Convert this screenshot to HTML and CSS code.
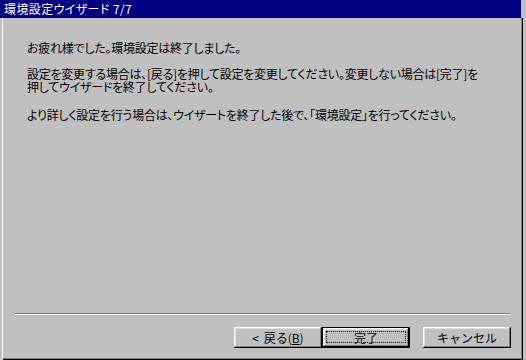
FILE: index.html
```html
<!DOCTYPE html>
<html lang="ja">
<head>
<meta charset="utf-8">
<title>環境設定ウイザード 7/7</title>
<link rel="stylesheet" href="styles.css">
</head>
<body>
<div class="window">
  <div class="titlebar">環境設定ウイザード 7/7</div>
  <div class="frame">
    <div class="content">
      <p class="msg">お疲れ様でした。環境設定は終了しました。</p>
      <p class="msg">設定を変更する場合は、[戻る]を押して設定を変更してください。変更しない場合は[完了]を<br>押してウイザードを終了してください。</p>
      <p class="msg">より詳しく設定を行う場合は、ウイザートを終了した後で、「環境設定」を行ってください。</p>
    </div>
    <div class="separator"></div>
    <div class="buttons">
      <div class="btn-pair">
        <button class="btn">&lt; 戻る(<u>B</u>)</button>
        <button class="btn default"><span class="focus">完了</span></button>
      </div>
      <button class="btn">キャンセル</button>
    </div>
  </div>
</div>
</body>
</html>
```
FILE: styles.css
```css
html, body {
  margin: 0;
  padding: 0;
}
body {
  background: #c0c0c0;
  width: 526px;
  height: 360px;
  overflow: hidden;
  font-family: "Noto Sans CJK JP", "Noto Sans", sans-serif;
  font-size: 12px;
  color: #000;
}
.window {
  width: 523px;
  height: 360px;
  display: flex;
  flex-direction: column;
}
.titlebar {
  width: 517px;
  height: 18px;
  line-height: 18px;
  background: #000080;
  color: #fff;
  padding-left: 4px;
  font-size: 12px;
  font-feature-settings: "palt";
  letter-spacing: 0.4px;
}
.frame {
  flex: 1;
  display: flex;
  flex-direction: column;
  box-shadow:
    inset 2px 0 0 #c0c0c0,
    inset 3px 0 0 #fff,
    inset -1px 0 0 #000,
    inset -2px 0 0 #808080,
    inset 0 -1px 0 #000,
    inset 0 -2px 0 #808080;
  padding: 0 12px 12px 15px;
}
.content {
  flex: 1;
  padding: 23px 0 0 12px;
}
.msg {
  margin: 0 0 13px 0;
  line-height: 13px;
  white-space: nowrap;
  font-feature-settings: "palt";
  letter-spacing: -0.25px;
}
.msg:nth-child(2) {
  margin-bottom: 15px;
}
.separator {
  width: 495px;
  border-top: 1px solid #808080;
  border-bottom: 1px solid #fff;
  height: 0;
  margin-bottom: 12px;
}
.buttons {
  display: flex;
  justify-content: flex-end;
  gap: 13px;
}
.btn-pair {
  display: flex;
}
.btn {
  width: 88px;
  height: 21px;
  margin: 0;
  padding: 0;
  border: none;
  background: #c0c0c0;
  font-family: "Noto Sans CJK JP", "Noto Sans", sans-serif;
  font-size: 12px;
  color: #000;
  box-shadow:
    inset -1px -1px 0 #000,
    inset 1px 1px 0 #fff,
    inset -2px -2px 0 #808080,
    inset 2px 2px 0 #dfdfdf;
  display: flex;
  align-items: center;
  justify-content: center;
  line-height: 13px;
  word-spacing: 2px;
}
.btn u {
  text-decoration: underline;
}
.btn.default {
  border: 1px solid #000;
  box-sizing: border-box;
  position: relative;
}
.focus {
  position: absolute;
  left: 3px;
  top: 3px;
  right: 3px;
  bottom: 4px;
  border: 1px dotted #000;
  display: flex;
  align-items: center;
  justify-content: center;
}
```
